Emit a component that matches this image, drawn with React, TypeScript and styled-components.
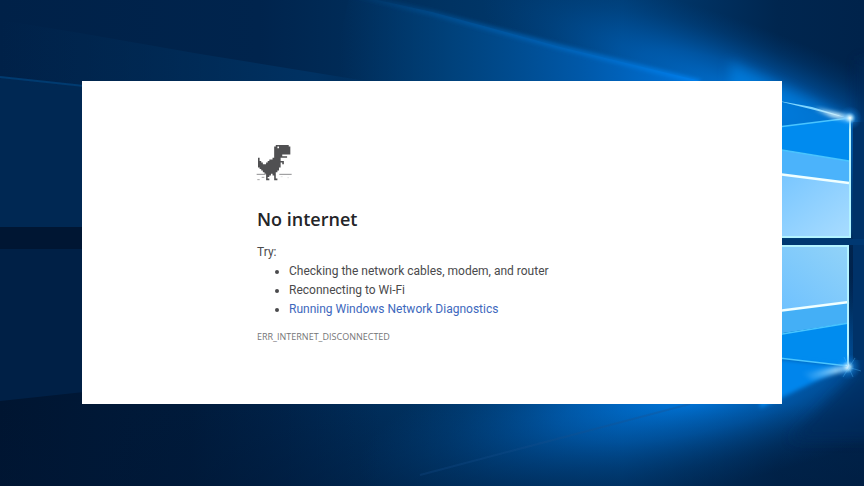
import React from "react";
import styled, { createGlobalStyle } from "styled-components";

const GlobalStyle = createGlobalStyle`
  * { box-sizing: border-box; }
  body {
    margin: 0;
    background: #00234b;
    font-family: "Open Sans", "Noto Sans", sans-serif;
  }
`;

const Desktop = styled.div`
  position: relative;
  isolation: isolate;
  display: grid;
  min-height: 100vh;
  padding: 81px 82px 82px;
  overflow: hidden;
`;

const WallpaperArt = styled.svg`
  position: absolute;
  inset: 0;
  z-index: -1;
  width: 100%;
  height: 100%;
`;

const ErrorPage = styled.main`
  padding: 62px 20% 48px 25%;
  background: #fff;
  color: #4a4a4c;
  font-family: Roboto, "Open Sans", sans-serif;
  font-size: 12px;
  line-height: 19px;
`;

const DinoArt = styled.svg`
  display: block;
  width: 40px;
  height: 40px;
  margin-left: -2px;
`;

const Title = styled.h1`
  margin: 22px 0 10px;
  color: #242528;
  font-family: "Open Sans", "Noto Sans", sans-serif;
  font-size: 18px;
  font-weight: 600;
  line-height: 28px;
`;

const Paragraph = styled.p`
  margin: 0;
`;

const Suggestions = styled.ul`
  margin: 0;
  padding-left: 32px;
`;

const DiagnosticsLink = styled.a`
  color: #3d68bd;
  text-decoration: none;
`;

const ErrorCode = styled.p`
  margin: 8px 0 0;
  color: #757577;
  font-family: "Open Sans", "Noto Sans", sans-serif;
  font-size: 9px;
`;

const DINO_ROWS = [
  "...........########.",
  "..........##.#######",
  "..........##########",
  "..........##########",
  "..........##########",
  "..........##########",
  "..........#####.....",
  "..........########..",
  "#........#####......",
  "#......#######......",
  "##....##########....",
  "###..#########.#....",
  "##############......",
  "##############......",
  ".############.......",
  "..###########.......",
  "...#########........",
  "....#######.........",
  ".....###.##.........",
  ".....##...#.........",
  ".....#....#.........",
  ".....##...##........",
];

const dinoPath = DINO_ROWS.flatMap((row, y) =>
  [...row.matchAll(/#+/g)].map(
    (run) => `M${run.index} ${y}h${run[0].length}v1h-${run[0].length}z`,
  ),
).join("");

function Dino() {
  return (
    <DinoArt viewBox="0 0 120 120" aria-hidden="true">
      <path d={dinoPath} fill="#505052" transform="translate(9 6) scale(4.85 4.8)" />
      <path d="M5 94h27M73 94h37" stroke="#77777a" strokeWidth="2.5" />
      <path d="M7 110h7M20 103h8" stroke="#909092" strokeWidth="2.5" />
      <path d="M77 101h6M97 104h5" stroke="#d4d4d6" strokeWidth="2" />
    </DinoArt>
  );
}

function Wallpaper() {
  return (
    <WallpaperArt viewBox="0 0 864 486" preserveAspectRatio="none" aria-hidden="true">
      <defs>
        <linearGradient id="base">
          <stop offset="0" stopColor="#002148" />
          <stop offset=".3" stopColor="#00244d" />
          <stop offset=".5" stopColor="#003261" />
          <stop offset=".72" stopColor="#003d75" />
          <stop offset=".9" stopColor="#00264f" />
          <stop offset="1" stopColor="#00234b" />
        </linearGradient>
        <radialGradient id="glow">
          <stop offset="0" stopColor="#0085f5" />
          <stop offset=".4" stopColor="#0070d4" stopOpacity=".7" />
          <stop offset=".75" stopColor="#005cb0" stopOpacity=".25" />
          <stop offset="1" stopColor="#004d99" stopOpacity="0" />
        </radialGradient>
        <radialGradient id="spark">
          <stop offset="0" stopColor="#fff" />
          <stop offset=".18" stopColor="#b8eaff" stopOpacity=".8" />
          <stop offset=".5" stopColor="#219eff" stopOpacity=".3" />
          <stop offset="1" stopColor="#087ce0" stopOpacity="0" />
        </radialGradient>
        <linearGradient id="beam" gradientUnits="userSpaceOnUse" x1="340" y1="0" x2="710" y2="0">
          <stop offset="0" stopColor="#003e76" stopOpacity="0" />
          <stop offset=".3" stopColor="#004581" stopOpacity=".8" />
          <stop offset=".65" stopColor="#0058a8" />
          <stop offset="1" stopColor="#0076e0" />
        </linearGradient>
        <linearGradient id="edge">
          <stop offset="0" stopColor="#00569f" stopOpacity=".1" />
          <stop offset=".5" stopColor="#0061b4" />
          <stop offset="1" stopColor="#0083f3" />
        </linearGradient>
        <linearGradient id="leftBeam">
          <stop offset="0" stopColor="#002d59" stopOpacity="0" />
          <stop offset=".2" stopColor="#002c57" stopOpacity=".3" />
          <stop offset=".75" stopColor="#003263" />
          <stop offset="1" stopColor="#003263" stopOpacity="0" />
        </linearGradient>
        <linearGradient id="night" gradientUnits="userSpaceOnUse" x1="0" y1="0" x2="380" y2="0">
          <stop offset="0" stopColor="#001531" />
          <stop offset=".5" stopColor="#001938" stopOpacity=".85" />
          <stop offset="1" stopColor="#002248" stopOpacity="0" />
        </linearGradient>
        <linearGradient id="pane" x1="0" y1="0" x2="1" y2="1">
          <stop offset="0" stopColor="#74c4ff" />
          <stop offset="1" stopColor="#a8dcff" />
        </linearGradient>
        <linearGradient id="lowerPane" x1="0" y1="1" x2="1" y2="0">
          <stop offset="0" stopColor="#6cc0ff" />
          <stop offset="1" stopColor="#92d3f8" />
        </linearGradient>
        <linearGradient id="lowerFlare" gradientUnits="userSpaceOnUse" x1="800" y1="0" x2="849" y2="0">
          <stop offset="0" stopColor="#68c3ff" stopOpacity="0" />
          <stop offset="1" stopColor="#e8faff" />
        </linearGradient>
        <linearGradient id="shade" x2="0" y2="1">
          <stop offset="0" stopColor="#001736" stopOpacity="0" />
          <stop offset="1" stopColor="#001736" stopOpacity=".35" />
        </linearGradient>
        <filter id="haze" x="-20%" y="-20%" width="140%" height="140%"><feGaussianBlur stdDeviation="6" /></filter>
        <filter id="soft" x="-20%" y="-20%" width="140%" height="140%"><feGaussianBlur stdDeviation="2" /></filter>
        <filter id="fine"><feGaussianBlur stdDeviation=".6" /></filter>
      </defs>

      <rect width="864" height="486" fill="url(#base)" />
      <path d="M0 20 80 33 200 54 360 80 420 90H0Z" fill="url(#leftBeam)" />
      <ellipse cx="745" cy="98" rx="280" ry="72" transform="rotate(21 745 98)" fill="url(#glow)" opacity=".8" />
      <path d="M350 -6 432 12 560 47 700 81H330Z" fill="url(#beam)" />
      <path d="M350 -6 432 13 560 47 700 82" fill="none" stroke="url(#edge)" strokeWidth="4" filter="url(#soft)" />
      <path d="M0 77 84 86V227H0Z" fill="#002b57" opacity=".75" />
      <path d="M0 77 84 86" stroke="#003a70" strokeWidth="2" filter="url(#fine)" />
      <rect y="227" width="84" height="22" fill="#001633" />
      <rect y="249" width="84" height="152" fill="#002046" />
      <path d="M0 401 84 392H400V486H0Z" fill="url(#night)" />

      <ellipse cx="700" cy="394" rx="350" ry="94" transform="rotate(-13 700 394)" fill="url(#glow)" opacity=".85" />
      <path d="M420 475 690 404" stroke="#16599d" strokeWidth="2" opacity=".4" filter="url(#fine)" />
      <rect y="404" width="864" height="82" fill="url(#shade)" />
      <path d="M858 60H880V440H790L856 372Z" fill="#002c5c" opacity=".65" filter="url(#haze)" />

      <path d="M730 62 850 118V237H730Z" fill="#0085ea" opacity=".65" filter="url(#haze)" />
      <path d="M853 122H864V360H853Z" fill="#003268" />
      <path d="M770 128 850 118V161L770 147Z" fill="#008bef" />
      <path d="M770 148 849 161V183L770 173Z" fill="#4bb3fb" />
      <path d="M770 173 849 183V237H770Z" fill="url(#pane)" />
      <path d="M770 246H849V303L770 311Z" fill="url(#lowerPane)" />
      <path d="M770 311 849 302V323L770 335Z" fill="#44aff6" />
      <path d="M770 335 849 323 848 366 770 357Z" fill="#008cef" />
      <path d="M760 357 848 366 760 408Z" fill="#0085ec" filter="url(#soft)" />
      <g fill="none" filter="url(#fine)">
        <path d="M850 118 770 128M770 148 849 161M770 336 849 323M770 357 848 366" stroke="#49c5ff" strokeWidth="1.6" />
        <path d="M770 173 849 183M770 312 849 302" stroke="#f0ffff" strokeWidth="2.5" />
        <path d="M850 117V237H770M770 246H848V367" stroke="#b3f3ff" strokeWidth="2" />
      </g>

      <rect x="770" y="239" width="94" height="6" fill="#003872" />
      <path d="M851 119 774 100 812 107Z" fill="#7fd6ff" filter="url(#fine)" />
      <path d="M851 116 814 108 832 117 851 121Z" fill="#dff8ff" filter="url(#soft)" />
      <path d="M849 365 802 373 812 380 848 370Z" fill="url(#lowerFlare)" filter="url(#soft)" />
      <circle cx="850" cy="118" r="12" fill="url(#spark)" />
      <circle cx="848" cy="367" r="13" fill="url(#spark)" />
      <path d="M844 357 853 377M855 358 843 377M841 365 861 371" stroke="#50bbff" opacity=".35" />
    </WallpaperArt>
  );
}

export default function App() {
  return (
    <>
      <GlobalStyle />
      <Desktop>
        <Wallpaper />
        <ErrorPage>
          <Dino />
          <Title>No internet</Title>
          <Paragraph>Try:</Paragraph>
          <Suggestions>
            <li>Checking the network cables, modem, and router</li>
            <li>Reconnecting to Wi-Fi</li>
            <li><DiagnosticsLink href="#diagnostics">Running Windows Network Diagnostics</DiagnosticsLink></li>
          </Suggestions>
          <ErrorCode>ERR_INTERNET_DISCONNECTED</ErrorCode>
        </ErrorPage>
      </Desktop>
    </>
  );
}
